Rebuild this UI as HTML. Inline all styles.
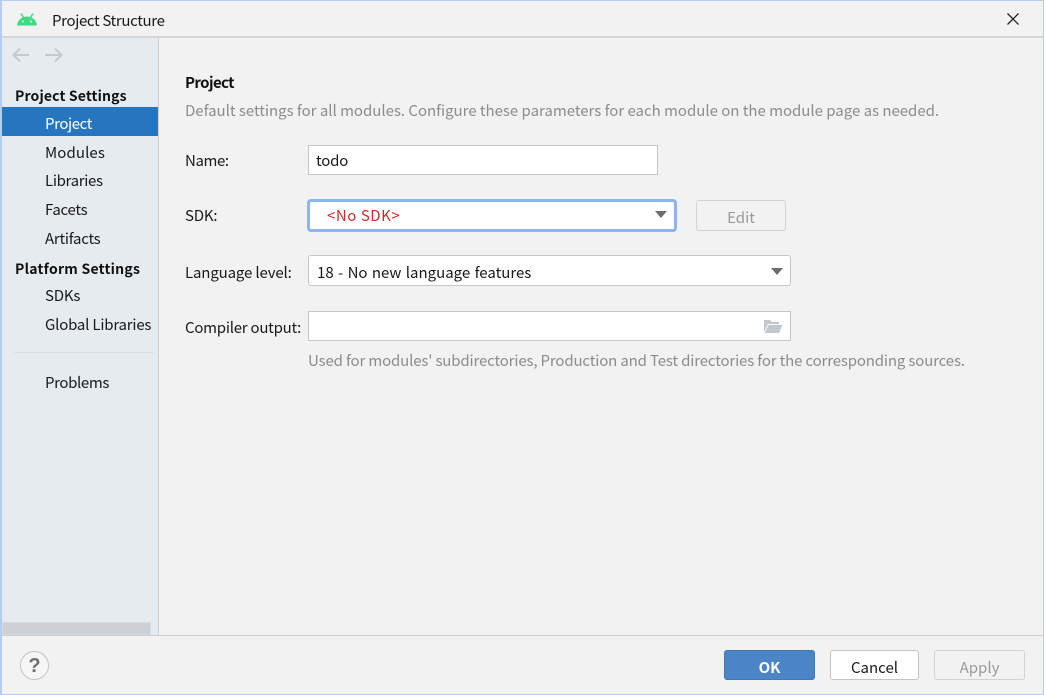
<!DOCTYPE html>
<html><head><meta charset="utf-8"><style>
html,body{margin:0;padding:0}
body{width:1044px;height:695px;position:relative;overflow:hidden;background:#f2f2f2;font-family:"Noto Sans CJK KR","Liberation Sans",sans-serif;font-size:15px;color:#1a1a1a}
.a{position:absolute}
.t{position:absolute;white-space:nowrap;line-height:20px;height:20px}
.g{color:#8c8c8c}
.b{font-weight:700;color:#111}
.box{position:absolute;box-sizing:border-box;background:#fff;border:1px solid #c6c6c6}
.btn{position:absolute;box-sizing:border-box;border-radius:3px;text-align:center;line-height:33px;height:30px}
</style></head><body>
<div class="a" style="left:0;top:0;width:1044px;height:695px;box-sizing:border-box;border:1px solid #b3cdf3;border-left-width:2px"></div>
<div class="a" style="left:2px;top:36px;width:1041px;height:2px;background:#d6d6d6"></div>
<div class="a" style="left:2px;top:38px;width:156px;height:597px;background:#e6ebf0"></div>
<div class="a" style="left:158px;top:38px;width:1px;height:597px;background:#d0d0d0"></div>
<div class="a" style="left:2px;top:635px;width:1041px;height:1px;background:#cdcdcd"></div>
<svg class="a" style="left:16px;top:12px" width="22" height="16" viewBox="0 0 22 16"><path d="M1 13.500C1.500 8 6 4.500 11 4.500S20.500 8 21 13.500Z" fill="#3ddc84"/><path d="M5 1.500L7.500 5.500M17 1.500L14.500 5.500" stroke="#3ddc84" stroke-width="1.500"/><circle cx="7" cy="9.500" r="1" fill="#f2f2f2"/><circle cx="15" cy="9.500" r="1" fill="#f2f2f2"/></svg>
<div class="t" style="left:52px;top:11px;letter-spacing:-.35px">Project Structure</div>
<svg class="a" style="left:1006px;top:12px" width="14" height="14"><path d="M1.500 1.500L12.500 12.500M12.500 1.500L1.500 12.500" stroke="#222" stroke-width="1.300" fill="none"/></svg>
<svg class="a" style="left:12px;top:47px" width="18" height="16"><path d="M1.500 8H17M8 1.500L1.500 8L8 14.500" stroke="#c6c9cc" stroke-width="2" fill="none"/></svg>
<svg class="a" style="left:45px;top:47px" width="18" height="16"><path d="M0 8H16.500M10 1.500L16.500 8L10 14.500" stroke="#c6c9cc" stroke-width="2" fill="none"/></svg>
<div class="t b" style="left:15px;top:86px;font-size:14px;letter-spacing:.14px">Project Settings</div>
<div class="a" style="left:2px;top:107px;width:156px;height:29px;background:#2675bf"></div>
<div class="t" style="left:45px;top:114px;color:#fff;letter-spacing:-.4px">Project</div>
<div class="t" style="left:45px;top:143px;letter-spacing:.1px">Modules</div>
<div class="t" style="left:45px;top:171px;letter-spacing:-.33px">Libraries</div>
<div class="t" style="left:45px;top:200px;letter-spacing:-.3px">Facets</div>
<div class="t" style="left:45px;top:229px;letter-spacing:-.25px">Artifacts</div>
<div class="t b" style="left:15px;top:259px;font-size:14px;letter-spacing:.25px">Platform Settings</div>
<div class="t" style="left:45px;top:286px;letter-spacing:-.2px">SDKs</div>
<div class="t" style="left:45px;top:315px;letter-spacing:-.2px">Global Libraries</div>
<div class="a" style="left:14px;top:352px;width:140px;height:1px;background:#dcdfe2"></div>
<div class="t" style="left:45px;top:373px;letter-spacing:-.37px">Problems</div>
<div class="a" style="left:2px;top:622px;width:149px;height:13px;box-sizing:border-box;background:#cdd0d4;border:1px solid #d8dbde"></div>
<div class="t b" style="left:185px;top:73px;letter-spacing:-.6px">Project</div>
<div class="t g" style="left:185px;top:101px;letter-spacing:-.02px">Default settings for all modules. Configure these parameters for each module on the module page as needed.</div>
<div class="t" style="left:185px;top:151px;letter-spacing:-.4px">Name:</div>
<div class="box" style="left:308px;top:145px;width:350px;height:30px"></div>
<div class="t" style="left:316px;top:151px;letter-spacing:-.2px">todo</div>
<div class="t" style="left:185px;top:206px;letter-spacing:-.2px">SDK:</div>
<div class="box" style="left:307px;top:199px;width:370px;height:33px;border:3px solid #8ab8ee;border-radius:4px"></div>
<div class="t" style="left:327px;top:206px;color:#cc2b2b;letter-spacing:.55px">&lt;No SDK&gt;</div>
<svg class="a" style="left:655px;top:211px" width="12" height="8"><path d="M0 0H12L6 7Z" fill="#6e6e6e"/></svg>
<div class="btn g" style="left:696px;top:200px;width:90px;height:31px;border:1px solid #d2d2d2;background:#f2f2f2;color:#9a9a9a">Edit</div>
<div class="t" style="left:185px;top:263px;letter-spacing:-.14px">Language level:</div>
<div class="box" style="left:308px;top:255px;width:483px;height:31px;border-radius:3px"></div>
<div class="t" style="left:317px;top:263px;word-spacing:1px">18 - No new language features</div>
<svg class="a" style="left:771px;top:268px" width="12" height="8"><path d="M0 0H12L6 7Z" fill="#6e6e6e"/></svg>
<div class="t" style="left:185px;top:318px;letter-spacing:-.25px">Compiler output:</div>
<div class="box" style="left:308px;top:311px;width:483px;height:30px"></div>
<svg class="a" style="left:763px;top:319px" width="20" height="15"><path d="M1 1H7L9 3H16V5H5L1 13Z" fill="#c3c8cc"/><path d="M5.500 6H19.500L16 14H1.500Z" fill="#c3c8cc"/></svg>
<div class="t g" style="left:308px;top:351px;letter-spacing:-.155px">Used for modules' subdirectories, Production and Test directories for the corresponding sources.</div>
<svg class="a" style="left:20px;top:651px" width="29" height="29"><circle cx="14.500" cy="14.500" r="14" fill="#f6f6f6" stroke="#c4c4c4"/><text x="14.500" y="21" text-anchor="middle" font-size="20" font-weight="700" fill="#6e6e6e" font-family="Liberation Sans">?</text></svg>
<div class="btn" style="left:724px;top:650px;width:91px;border:1px solid #3f78b5;background:#4a86c7;color:#fff;font-weight:700">OK</div>
<div class="btn" style="left:830px;top:650px;width:89px;border:1px solid #c4c4c4;background:#fff">Cancel</div>
<div class="btn" style="left:934px;top:650px;width:91px;border:1px solid #d2d2d2;color:#9a9a9a">Apply</div>
</body></html>
